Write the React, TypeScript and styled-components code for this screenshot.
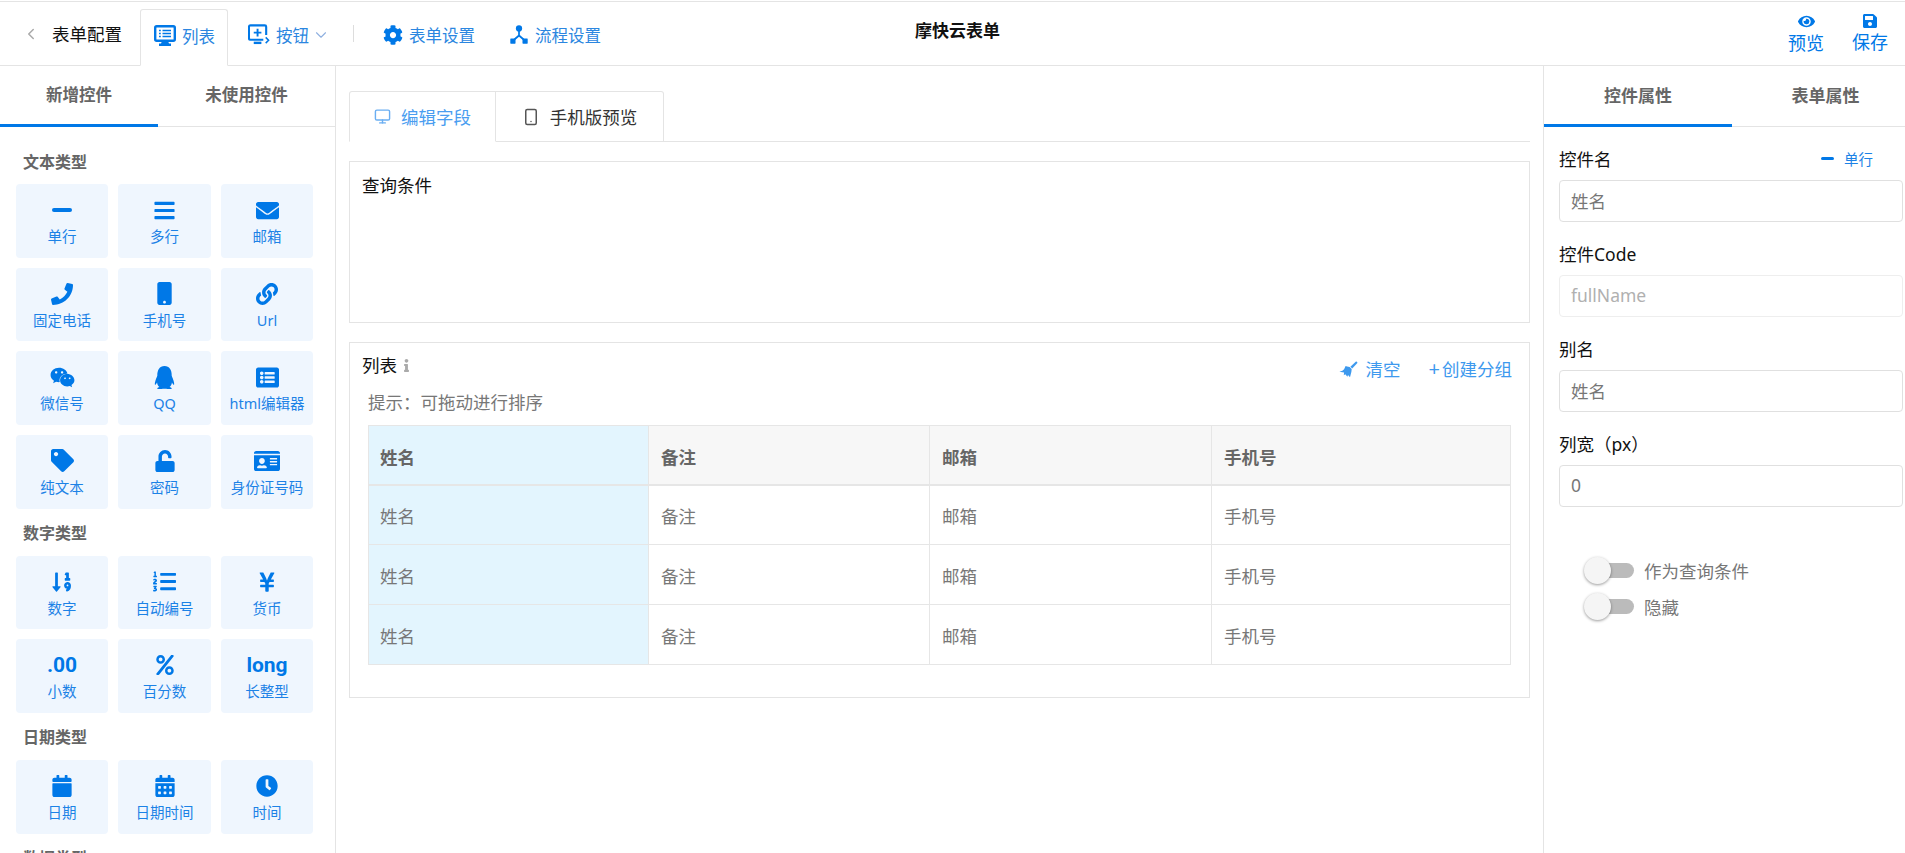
import React from "react";
import styled, { createGlobalStyle } from "styled-components";
import { ChevronDown, ChevronLeft, Monitor, Smartphone } from "lucide-react";
import {
  FaBars,
  FaCalendar,
  FaCalendarAlt,
  FaClock,
  FaCog,
  FaEnvelope,
  FaEye,
  FaIdCard,
  FaInfo,
  FaLink,
  FaListAlt,
  FaListOl,
  FaMobile,
  FaPercent,
  FaPhone,
  FaQq,
  FaSave,
  FaSortNumericDown,
  FaTag,
  FaUnlock,
  FaWeixin,
  FaYenSign,
} from "react-icons/fa";

const BLUE = "#0078e7";
const FONT = `"Noto Sans", "Noto Sans CJK SC", sans-serif`;

const GlobalStyle = createGlobalStyle`
  * { box-sizing: border-box; }
  html, body { margin: 0; padding: 0; height: 100%; overflow: hidden; background: #fff; }
  body { font-family: ${FONT}; color: #222; }
`;

const Page = styled.div`
  height: 853px;
  padding-top: 1px;
  display: flex;
  flex-direction: column;
  overflow: hidden;
`;

/* top bar */
const Header = styled.header`
  height: 65px;
  flex: none;
  border-top: 1px solid #e4e4e4;
  border-bottom: 1px solid #e4e4e4;
  display: grid;
  grid-template-columns: 915px auto 1fr;
  align-items: center;
  position: relative;
  z-index: 1;
`;
const HeaderLeft = styled.div`
  display: flex;
  align-items: center;
  height: 100%;
  padding-left: 22px;
`;
const BackTitle = styled.div`
  display: flex;
  align-items: center;
  font-size: 17.5px;
  color: #111;
  svg { color: #aaa; margin-right: 12px; }
`;
const HeadTab = styled.div<{ $active?: boolean; $offset?: number }>`
  display: flex;
  align-items: center;
  gap: 6px;
  color: #2b86e0;
  font-size: 16.5px;
  white-space: nowrap;
  padding-top: 2px;
  margin-left: ${(p) => p.$offset ?? 0}px;
  ${(p) =>
    p.$active &&
    `
    align-self: flex-end;
    height: 57px;
    margin: 0 20px -1px 18px;
    padding: 0 12px 4px 13px;
    background: #fff;
    border: 1px solid #e4e4e4;
    border-bottom-color: #fff;
    border-radius: 3px 3px 0 0;
  `}
  > svg:first-child { color: ${BLUE}; }
`;
const HeadChevron = styled(ChevronDown)`
  margin-left: -3px;
  color: #8fb0e0;
`;
const HeadDivider = styled.span`
  width: 1px;
  height: 17px;
  background: #ddd;
  margin: 0 29px 0 23px;
`;
const Title = styled.h1`
  margin: 0;
  font-size: 17px;
  font-weight: 700;
  color: #111;
  padding-bottom: 8px;
`;
const HeaderRight = styled.div`
  justify-self: end;
  display: flex;
  gap: 28px;
  padding-right: 17px;
`;
const HeadAction = styled.div`
  display: flex;
  flex-direction: column;
  align-items: center;
  gap: 1px;
  color: ${BLUE};
  font-size: 18px;
  line-height: 24px;
  svg { display: block; }
`;

/* columns */
const Body = styled.div`
  flex: 1;
  min-height: 0;
  display: flex;
`;
const LeftPanel = styled.aside`
  width: 336px;
  flex: none;
  border-right: 1px solid #e4e4e4;
  overflow: hidden;
`;
const Center = styled.main`
  flex: 1;
  min-width: 0;
  padding: 25px 13px 0;
`;
const RightPanel = styled.aside`
  width: 362px;
  flex: none;
  border-left: 1px solid #e4e4e4;
  overflow: hidden;
`;

const PanelTabs = styled.div`
  display: flex;
  height: 61px;
  border-bottom: 1px solid #e4e4e4;
`;
const PanelTab = styled.div<{ $active?: boolean; $width: string; $size?: number }>`
  width: ${(p) => p.$width};
  flex: none;
  height: 61px;
  padding-bottom: 2px;
  display: flex;
  align-items: center;
  justify-content: center;
  font-size: ${(p) => p.$size ?? 16.5}px;
  font-weight: 700;
  color: #666;
  border-bottom: 3px solid ${(p) => (p.$active ? BLUE : "transparent")};
`;

/* widget palette */
const Palette = styled.div`
  padding: 10px 22px 0 16px;
`;
const SectionTitle = styled.h3`
  margin: 12.5px 0 10.5px 7px;
  font-size: 16px;
  line-height: 24px;
  font-weight: 700;
  color: #666;
`;
const WidgetGrid = styled.div`
  display: grid;
  grid-template-columns: 92px 93px 92px;
  grid-auto-rows: 73.67px;
  gap: 10px;
`;
const WidgetCard = styled.div`
  background: #eff6fe;
  border-radius: 4px;
  color: ${BLUE};
  display: flex;
  flex-direction: column;
  align-items: center;
  padding-top: 14px;
`;
const WidgetIcon = styled.div`
  height: 24px;
  display: flex;
  align-items: center;
  justify-content: center;
`;
const WidgetText = styled.div`
  font-family: Roboto, ${FONT};
  font-size: 21px;
  font-weight: 700;
  line-height: 24px;
`;
const WidgetLabel = styled.div`
  margin-top: 4px;
  font-size: 14.5px;
  line-height: 20px;
  white-space: nowrap;
  color: #1c82e6;
`;
const MinusBar = styled.span<{ $w: number; $h: number }>`
  display: block;
  width: ${(p) => p.$w}px;
  height: ${(p) => p.$h}px;
  background: ${BLUE};
  border-radius: 2px;
`;

/* center */
const FieldTabs = styled.div`
  display: flex;
  height: 51px;
  border-bottom: 1px solid #e4e4e4;
`;
const FieldTab = styled.div<{ $active?: boolean; $width: number }>`
  width: ${(p) => p.$width}px;
  height: 51px;
  flex: none;
  display: flex;
  align-items: center;
  justify-content: center;
  gap: 10px;
  font-size: 17.5px;
  color: ${(p) => (p.$active ? "#4a9df0" : "#333")};
  background: #fff;
  border: 1px solid #e4e4e4;
  border-left-width: ${(p) => (p.$active ? 1 : 0)}px;
  border-bottom-color: ${(p) => (p.$active ? "#fff" : "#e4e4e4")};
  border-radius: ${(p) => (p.$active ? "3px 0 0 0" : "0 3px 0 0")};
  svg { color: ${(p) => (p.$active ? "#6aaef2" : "#555")}; }
`;
const QueryBox = styled.section`
  margin-top: 19px;
  height: 162px;
  border: 1px solid #e4e4e4;
  padding: 11px 12px;
  font-size: 17.5px;
  line-height: 24px;
  color: #111;
`;
const ListBox = styled.section`
  margin-top: 19px;
  border: 1px solid #e4e4e4;
  padding-bottom: 32px;
`;
const ListHead = styled.div`
  display: flex;
  justify-content: space-between;
  padding: 10px 17px 0 12px;
`;
const ListTitle = styled.div`
  display: flex;
  align-items: center;
  gap: 3px;
  align-self: flex-start;
  font-size: 17.5px;
  line-height: 24px;
  color: #111;
  svg { color: #aaa; }
`;
const ListActions = styled.div`
  display: flex;
  gap: 28px;
  padding-top: 4px;
  color: #3d99ee;
  font-size: 17.5px;
  line-height: 24px;
`;
const ListAction = styled.span`
  display: flex;
  align-items: center;
  gap: 8px;
`;
const PlusSign = styled.span`
  font-size: 20px;
  margin-right: -6px;
`;
const Tip = styled.div`
  margin: 9px 0 11px 18px;
  font-size: 17.5px;
  line-height: 24px;
  color: #777;
`;
const Table = styled.table`
  width: 1142px;
  margin-left: 18px;
  table-layout: fixed;
  border-collapse: collapse;
  font-size: 17.5px;
  color: #777;
`;
const Th = styled.th<{ $first?: boolean }>`
  height: 59px;
  padding: 4px 11px 0 ${(p) => (p.$first ? 11 : 12)}px;
  text-align: left;
  font-weight: 700;
  color: #666;
  background: ${(p) => (p.$first ? "#e3f5fe" : "#f7f7f7")};
  border: 1px solid #e6e6e6;
  border-bottom-width: 2px;
`;
const Td = styled.td<{ $first?: boolean }>`
  height: 60px;
  padding: 1px 11px 0 ${(p) => (p.$first ? 11 : 12)}px;
  background: ${(p) => (p.$first ? "#e3f5fe" : "#fff")};
  border: 1px solid #e6e6e6;
`;

/* right form */
const Form = styled.div`
  padding: 20px 2px 0 15px;
`;
const Field = styled.div`
  margin-bottom: 20px;
`;
const FieldLabel = styled.div`
  display: flex;
  justify-content: space-between;
  align-items: center;
  height: 22px;
  margin-bottom: 11px;
  font-size: 17.5px;
  color: #111;
`;
const FieldType = styled.span`
  display: flex;
  align-items: center;
  gap: 10px;
  padding-right: 30px;
  font-size: 14.5px;
  color: #1c82e6;
`;
const Input = styled.input<{ $muted?: boolean }>`
  display: block;
  width: 344px;
  height: 42px;
  padding: 0 11px 2px;
  font-family: ${FONT};
  font-size: 17.5px;
  color: ${(p) => (p.$muted ? "#b0b0b0" : "#777")};
  background: #fff;
  border: 1px solid ${(p) => (p.$muted ? "#eee" : "#e0e0e0")};
  border-radius: 4px;
  outline: none;
`;
const Toggles = styled.div`
  padding: 25px 0 0 31px;
`;
const ToggleRow = styled.div`
  height: 36px;
  display: flex;
  align-items: center;
  gap: 10px;
  font-size: 17.5px;
  color: #777;
`;
const Track = styled.span`
  position: relative;
  display: block;
  width: 44px;
  height: 15px;
  background: #bbb;
  border-radius: 8px;
`;
const Knob = styled.span`
  position: absolute;
  left: -6px;
  top: -6px;
  width: 27px;
  height: 27px;
  border-radius: 50%;
  background: #f5f5f5;
  box-shadow: 0 1px 3px rgba(0, 0, 0, 0.4);
`;

const ListMonitorIcon = () => (
  <svg width="22" height="21" viewBox="0 0 22 21" fill="none">
    <rect x="1.2" y="1.2" width="19.6" height="14.6" rx="1.5" stroke={BLUE} strokeWidth="2.4" />
    <path d="M5 5.5h1.8M8.500 5.500H17M5 8.500h1.800M8.500 8.500H17M5 11.500h1.800M8.500 11.500H17" stroke={BLUE} strokeWidth="1.6" />
    <path d="M8 16h6l1 2.500h2V21H5v-2.500h2z" fill={BLUE} />
  </svg>
);

const ButtonMonitorIcon = () => (
  <svg width="22" height="21" viewBox="0 0 23 21" fill="none">
    <path d="M16 16H2.500A1.500 1.500 0 0 1 1 14.500V2.500A1.500 1.500 0 0 1 2.500 1h15A1.500 1.500 0 0 1 19 2.500V11" stroke={BLUE} strokeWidth="2.2" />
    <path d="M10 4.500v8M6 8.500h8" stroke={BLUE} strokeWidth="2" />
    <path d="M6 18h8v2.500H6z" fill={BLUE} />
    <path d="M18.500 13.500l3 3-3 3" stroke={BLUE} strokeWidth="1.600" />
  </svg>
);

const FlowIcon = () => (
  <svg width="20" height="21" viewBox="-1.500 -1.500 23 24" fill={BLUE}>
    <circle cx="10" cy="3.600" r="3.600" />
    <path d="M9 6h2v5.200l5 4.300-1.300 1.500L10 13l-4.700 4-1.300-1.500 5-4.300z" />
    <rect x="0" y="15" width="6" height="6" rx="0.600" />
    <rect x="14" y="15" width="6" height="6" rx="0.600" />
  </svg>
);

const BroomIcon = () => (
  <svg width="19" height="17" viewBox="0 0 19 17" fill="#3d99ee">
    <path d="M17.200 0.300l1.400 1.400-5.400 5.700-1.800-1.700z" />
    <path d="M6.600 4.900l1.500 0.500 2.500 0.700 2.100 2-0.300 2.600-1.400 5.600-2-2.200-0.600 1.700-2.100-2.600-1.500 1.100 0.300-2.700L0.400 10.700l3-0.900 1.700-1.500z" />
  </svg>
);

type Widget = { label: string; icon: React.ReactNode };

const textWidgets: Widget[] = [
  { label: "单行", icon: <MinusBar $w={20} $h={4} /> },
  { label: "多行", icon: <FaBars size={23} /> },
  { label: "邮箱", icon: <FaEnvelope size={23} /> },
  { label: "固定电话", icon: <FaPhone size={22} /> },
  { label: "手机号", icon: <FaMobile size={23} /> },
  { label: "Url", icon: <FaLink size={22} /> },
  { label: "微信号", icon: <FaWeixin size={25} /> },
  { label: "QQ", icon: <FaQq size={23} /> },
  { label: "html编辑器", icon: <FaListAlt size={23} /> },
  { label: "纯文本", icon: <FaTag size={23} /> },
  { label: "密码", icon: <FaUnlock size={22} /> },
  { label: "身份证号码", icon: <FaIdCard size={26} /> },
];

const numberWidgets: Widget[] = [
  { label: "数字", icon: <FaSortNumericDown size={22} /> },
  { label: "自动编号", icon: <FaListOl size={23} /> },
  { label: "货币", icon: <FaYenSign size={22} /> },
  { label: "小数", icon: <WidgetText>.00</WidgetText> },
  { label: "百分数", icon: <FaPercent size={20} /> },
  { label: "长整型", icon: <WidgetText>long</WidgetText> },
];

const dateWidgets: Widget[] = [
  { label: "日期", icon: <FaCalendar size={22} /> },
  { label: "日期时间", icon: <FaCalendarAlt size={22} /> },
  { label: "时间", icon: <FaClock size={22} /> },
];

const columns = ["姓名", "备注", "邮箱", "手机号"];
const colWidths = [280, 281, 282, 299];

const WidgetSection = ({ title, items }: { title: string; items: Widget[] }) => (
  <>
    <SectionTitle>{title}</SectionTitle>
    <WidgetGrid>
      {items.map((w) => (
        <WidgetCard key={w.label}>
          <WidgetIcon>{w.icon}</WidgetIcon>
          <WidgetLabel>{w.label}</WidgetLabel>
        </WidgetCard>
      ))}
    </WidgetGrid>
  </>
);

export default function App() {
  return (
    <Page>
      <GlobalStyle />
      <Header>
        <HeaderLeft>
          <BackTitle>
            <ChevronLeft size={18} />
            表单配置
          </BackTitle>
          <HeadTab $active>
            <ListMonitorIcon />
            列表
          </HeadTab>
          <HeadTab>
            <ButtonMonitorIcon />
            按钮
            <HeadChevron size={18} strokeWidth={1.5} />
          </HeadTab>
          <HeadDivider />
          <HeadTab>
            <FaCog size={20} />
            表单设置
          </HeadTab>
          <HeadTab $offset={34}>
            <FlowIcon />
            流程设置
          </HeadTab>
        </HeaderLeft>
        <Title>摩快云表单</Title>
        <HeaderRight>
          <HeadAction>
            <FaEye size={17} />
            预览
          </HeadAction>
          <HeadAction>
            <FaSave size={16} />
            保存
          </HeadAction>
        </HeaderRight>
      </Header>
      <Body>
        <LeftPanel>
          <PanelTabs>
            <PanelTab $active $width="158px">新增控件</PanelTab>
            <PanelTab $width="177px">未使用控件</PanelTab>
          </PanelTabs>
          <Palette>
            <WidgetSection title="文本类型" items={textWidgets} />
            <WidgetSection title="数字类型" items={numberWidgets} />
            <WidgetSection title="日期类型" items={dateWidgets} />
            <SectionTitle>数据类型</SectionTitle>
          </Palette>
        </LeftPanel>
        <Center>
          <FieldTabs>
            <FieldTab $active $width={147}>
              <Monitor size={17} />
              编辑字段
            </FieldTab>
            <FieldTab $width={168}>
              <Smartphone size={18} />
              手机版预览
            </FieldTab>
          </FieldTabs>
          <QueryBox>查询条件</QueryBox>
          <ListBox>
            <ListHead>
              <ListTitle>
                列表
                <FaInfo size={13} />
              </ListTitle>
              <ListActions>
                <ListAction>
                  <BroomIcon />
                  清空
                </ListAction>
                <ListAction>
                  <PlusSign>+</PlusSign>
                  创建分组
                </ListAction>
              </ListActions>
            </ListHead>
            <Tip>提示：可拖动进行排序</Tip>
            <Table>
              <colgroup>
                {colWidths.map((w) => (
                  <col key={w} width={w} />
                ))}
              </colgroup>
              <thead>
                <tr>
                  {columns.map((c, i) => (
                    <Th key={c} $first={i === 0}>{c}</Th>
                  ))}
                </tr>
              </thead>
              <tbody>
                {[0, 1, 2].map((r) => (
                  <tr key={r}>
                    {columns.map((c, i) => (
                      <Td key={c} $first={i === 0}>{c}</Td>
                    ))}
                  </tr>
                ))}
              </tbody>
            </Table>
          </ListBox>
        </Center>
        <RightPanel>
          <PanelTabs>
            <PanelTab $active $width="188px" $size={17}>控件属性</PanelTab>
            <PanelTab $width="187px" $size={17}>表单属性</PanelTab>
          </PanelTabs>
          <Form>
            <Field>
              <FieldLabel>
                控件名
                <FieldType>
                  <MinusBar $w={13} $h={3} />
                  单行
                </FieldType>
              </FieldLabel>
              <Input readOnly value="姓名" />
            </Field>
            <Field>
              <FieldLabel>控件Code</FieldLabel>
              <Input readOnly $muted value="fullName" />
            </Field>
            <Field>
              <FieldLabel>别名</FieldLabel>
              <Input readOnly value="姓名" />
            </Field>
            <Field>
              <FieldLabel>列宽（px）</FieldLabel>
              <Input readOnly value="0" />
            </Field>
            <Toggles>
              <ToggleRow>
                <Track><Knob /></Track>
                作为查询条件
              </ToggleRow>
              <ToggleRow>
                <Track><Knob /></Track>
                隐藏
              </ToggleRow>
            </Toggles>
          </Form>
        </RightPanel>
      </Body>
    </Page>
  );
}
